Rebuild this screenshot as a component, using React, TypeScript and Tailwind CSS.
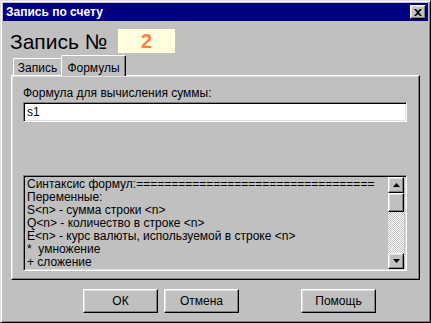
import React from 'react';

const raised =
  'border border-t-white border-l-white border-r-black border-b-black shadow-[inset_-1px_-1px_#808080,inset_1px_1px_#dfdfdf]';
const sunken =
  'border border-t-[#808080] border-l-[#808080] border-r-white border-b-white shadow-[inset_1px_1px_#000,inset_-1px_-1px_#dfdfdf]';

function Arrow({ up }: { up?: boolean }) {
  return (
    <svg width="7" height="4" viewBox="0 0 7 4">
      {up ? <path d="M3.5 0 L7 4 L0 4 Z" fill="#000" /> : <path d="M0 0 L7 0 L3.5 4 Z" fill="#000" />}
    </svg>
  );
}

function ScrollBar() {
  return (
    <div className="w-[16px] h-full flex flex-col shrink-0">
      <div className={`${raised} h-[16px] flex items-center justify-center`}>
        <Arrow up />
      </div>
      <div className={`${raised} h-[19px]`} />
      <div className="flex-1 bg-[image:repeating-conic-gradient(#fff_0%_25%,#c0c0c0_0%_50%)] bg-[length:2px_2px]" />
      <div className={`${raised} h-[16px] flex items-center justify-center`}>
        <Arrow />
      </div>
    </div>
  );
}

function Btn({ children }: { children: React.ReactNode }) {
  return (
    <button
      type="button"
      className={`${raised} w-[75px] h-[24px] bg-[#c0c0c0] text-[12px] text-black flex items-center justify-center`}
    >
      {children}
    </button>
  );
}

const syntaxLines = [
  'Синтаксис формул:==================================',
  'Переменные:',
  'S<n> - сумма строки <n>',
  'Q<n> - количество в строке <n>',
  'E<n> - курс валюты, используемой в строке <n>',
  '*  умножение',
  '+ сложение',
];

export default function App() {
  return (
    <div
      className="w-[431px] h-[323px] bg-[#c0c0c0] border border-t-[#dfdfdf] border-l-[#dfdfdf] border-r-black border-b-black shadow-[inset_1px_1px_#fff,inset_-1px_-1px_#808080] p-[2px] flex flex-col text-black"
      style={{ fontFamily: '"Liberation Sans", Arial, sans-serif' }}
    >
      {/* title bar */}
      <div className="h-[18px] bg-[#000080] flex items-center justify-between pl-[3px] pr-[2px]">
        <span className="text-white font-bold text-[12px] leading-none">Запись по счету</span>
        <div className={`${raised} bg-[#c0c0c0] w-[16px] h-[14px] flex items-center justify-center`}>
          <svg width="8" height="7" viewBox="0 0 8 7">
            <path d="M0 0h2l2 2 2-2h2L5 3.5 8 7H6L4 5 2 7H0l3-3.5z" fill="#000" />
          </svg>
        </div>
      </div>

      {/* heading */}
      <div className="flex items-center mt-[8px] pl-[7px] h-[24px]">
        <span className="w-[108px] text-[21px] leading-none">Запись №</span>
        <div className="w-[57px] h-[24px] bg-[#ffffe0] flex items-center justify-center text-[#ff8040] font-bold text-[20px] leading-none">
          2
        </div>
      </div>

      {/* tabs */}
      <div className="relative z-10 flex items-end h-[21px] mt-[2px] -mb-px ml-[10px]">
        <div className="w-[48px] h-[17px] mb-px border-l border-t border-white rounded-tl-[2px] flex items-center justify-center text-[12px] pt-[2px]">
          Запись
        </div>
        <div className="w-[65px] h-[21px] bg-[#c0c0c0] border-l border-t border-white border-r border-r-black shadow-[inset_-1px_0_#808080] rounded-t-[2px] flex items-start justify-center text-[12px] pt-[3px]">
          Формулы
        </div>
      </div>

      {/* panel */}
      <div className="ml-[8px] w-[409px] h-[205px] border border-t-white border-l-white border-r-black border-b-black shadow-[inset_-1px_-1px_#808080,inset_1px_1px_#dfdfdf] pl-[11px] pt-[10px] flex flex-col">
        <div className="text-[12px] leading-[14px] h-[16px]">Формула для вычисления суммы:</div>
        <div className={`${sunken} bg-white w-[384px] h-[20px] flex items-center pl-[3px] text-[12px]`}>s1</div>
        <div className={`${sunken} mt-[53px] w-[384px] h-[96px] flex px-[2px] py-[1px]`}>
          <div className="flex-1 overflow-hidden pl-[1px] pt-[1px] text-[12px] leading-[13px] whitespace-pre">
            {syntaxLines.map((l) => (
              <div key={l}>{l}</div>
            ))}
          </div>
          <ScrollBar />
        </div>
      </div>

      {/* buttons */}
      <div className="flex mt-[9px] pl-[80px]">
        <Btn>ОК</Btn>
        <div className="w-[6px]" />
        <Btn>Отмена</Btn>
        <div className="w-[62px]" />
        <Btn>Помощь</Btn>
      </div>
    </div>
  );
}
